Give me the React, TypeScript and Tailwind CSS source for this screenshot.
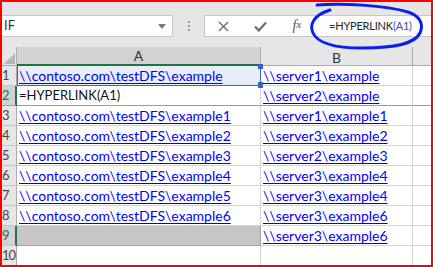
import React from "react";

const colA = [
  "\\\\contoso.com\\testDFS\\example",
  "=HYPERLINK(A1)",
  "\\\\contoso.com\\testDFS\\example1",
  "\\\\contoso.com\\testDFS\\example2",
  "\\\\contoso.com\\testDFS\\example3",
  "\\\\contoso.com\\testDFS\\example4",
  "\\\\contoso.com\\testDFS\\example5",
  "\\\\contoso.com\\testDFS\\example6",
  "",
  "",
];

const colB = [
  "\\\\server1\\example",
  "\\\\server2\\example",
  "\\\\server1\\example1",
  "\\\\server3\\example2",
  "\\\\server2\\example3",
  "\\\\server3\\example4",
  "\\\\server3\\example4",
  "\\\\server3\\example6",
  "\\\\server3\\example6",
  "",
];

function Link({ text }: { text: string }) {
  return (
    <span className="text-[#0000ff] underline decoration-1 underline-offset-[2px] whitespace-nowrap">
      {text}
    </span>
  );
}

export default function App() {
  return (
    <div className="relative w-[433px] h-[267px] overflow-hidden border-2 border-[#ff0000] bg-white font-['Lato',sans-serif] text-[#222]">
      {/* Formula bar */}
      <div className="h-[45px] bg-[#e6e6e6] flex items-start pt-[13px]">
        <div className="w-[171px] h-[22px] bg-white border border-l-0 border-[#c6c6c6] flex items-center justify-between pl-[2px] pr-[6px]">
          <span className="text-[13px] text-[#333]">IF</span>
          <svg width="8" height="5" viewBox="0 0 8 5">
            <path d="M0 0 L8 0 L4 5 Z" fill="#7a7a7a" />
          </svg>
        </div>
        <div className="w-[31px] h-[22px] flex flex-col items-center justify-center gap-[2px]">
          <div className="w-[2px] h-[2px] bg-[#9a9a9a]" />
          <div className="w-[2px] h-[2px] bg-[#9a9a9a]" />
          <div className="w-[2px] h-[2px] bg-[#9a9a9a]" />
        </div>
        <div className="flex-1 h-[22px] bg-white border border-r-0 border-[#c6c6c6] flex items-center">
          <div className="w-[37px] flex justify-center">
            <svg width="11" height="11" viewBox="0 0 11 11">
              <path d="M1 1 L10 10 M10 1 L1 10" stroke="#6e6e6e" strokeWidth="1.4" />
            </svg>
          </div>
          <div className="w-[37px] flex justify-center">
            <svg width="13" height="11" viewBox="0 0 13 11">
              <path d="M1 5.5 L4.8 9.5 L12 1.5" stroke="#6e6e6e" strokeWidth="2.2" fill="none" />
            </svg>
          </div>
          <div className="w-[36px] flex justify-center font-['Liberation_Serif',serif] italic text-[14px] text-[#555] leading-none">
            f<span className="text-[11px]">x</span>
          </div>
          <div className="pl-[14px] text-[11px] tracking-[-0.2px] whitespace-nowrap text-[#222]">
            =HYPERLINK<span className="text-[#3b4fb0]">(A1)</span>
          </div>
        </div>
      </div>

      {/* Sheet */}
      <div className="grid grid-cols-[15px_244px_152px_1fr]">
        {/* header row */}
        <div className="relative h-[19px] bg-[#e6e6e6] border-r border-b border-[#ababab]">
          <svg className="absolute right-[1px] bottom-[1px]" width="11" height="11" viewBox="0 0 11 11">
            <path d="M11 0 L11 11 L0 11 Z" fill="#b5b5b5" />
          </svg>
        </div>
        <div className="h-[19px] bg-[#d2d2d2] border-r border-[#ababab] border-b-2 border-b-[#217346] flex items-center justify-center text-[14px] text-[#333]">
          A
        </div>
        <div className="h-[19px] bg-[#e6e6e6] border-r border-b border-[#ababab] flex items-center justify-center text-[14px] text-[#333] pt-[2px]">
          B
        </div>
        <div className="h-[19px] bg-[#e6e6e6] border-b border-[#ababab]" />

        {colA.map((a, i) => {
          const row = i + 1;
          const active = row === 2 || row === 9;
          const rowLine = row === 2 ? "border-b-[#9e9e9e]" : "border-b-[#d4d4d4]";
          return (
            <React.Fragment key={row}>
              <div
                className={`h-[20px] border-b flex items-center text-[13px] tracking-[-1px] ${
                  active
                    ? "bg-[#d2d2d2] text-[#217346] border-r-2 border-r-[#217346]"
                    : "bg-[#e6e6e6] text-[#444] border-r border-r-[#ababab]"
                } ${row === 2 ? "border-b-[#9e9e9e]" : "border-b-[#c6c6c6]"}`}
              >
                {row}
              </div>
              {row === 1 ? (
                <div className="relative h-[20px] bg-[#e8eef8] border-r border-b border-[#3465c0] shadow-[inset_1px_0_0_#3465c0] flex items-center pl-[2px] text-[14px] overflow-visible">
                  <Link text={a} />
                  <div className="absolute right-[-3px] top-[-2px] w-[5px] h-[5px] bg-[#3465c0]" />
                  <div className="absolute right-[-3px] bottom-[-3px] w-[5px] h-[6px] bg-[#3465c0]" />
                </div>
              ) : row === 9 ? (
                <div className="h-[20px] bg-[#c6c6c6] border-r border-b border-[#a3a3a3]" />
              ) : (
                <div className={`h-[20px] border-r border-r-[#d4d4d4] border-b ${rowLine} flex items-center pl-[2px] text-[14px] overflow-hidden`}>
                  {row === 2 ? (
                    <span className="text-[#111] whitespace-nowrap text-[13px]">{a}</span>
                  ) : a ? (
                    <Link text={a} />
                  ) : null}
                </div>
              )}
              <div className={`h-[20px] border-r border-r-[#d4d4d4] border-b ${rowLine} flex items-center pl-[2px] text-[14px] overflow-hidden`}>
                {colB[i] ? <Link text={colB[i]} /> : null}
              </div>
              <div className={`h-[20px] border-b ${rowLine}`} />
            </React.Fragment>
          );
        })}
      </div>

      {/* hand-drawn annotation circle */}
      <svg className="absolute left-[-2px] top-[-2px] pointer-events-none" width="433" height="267" viewBox="0 0 433 267">
        <path
          d="M317 5 C 340 3, 385 5, 408 12 C 420 16, 424 24, 420 33 C 415 43, 398 48, 362 48 C 335 48, 318 44, 313 33 C 309 24, 314 15, 330 10"
          fill="none"
          stroke="#0a1ef0"
          strokeWidth="3"
          strokeLinecap="round"
        />
      </svg>
    </div>
  );
}
